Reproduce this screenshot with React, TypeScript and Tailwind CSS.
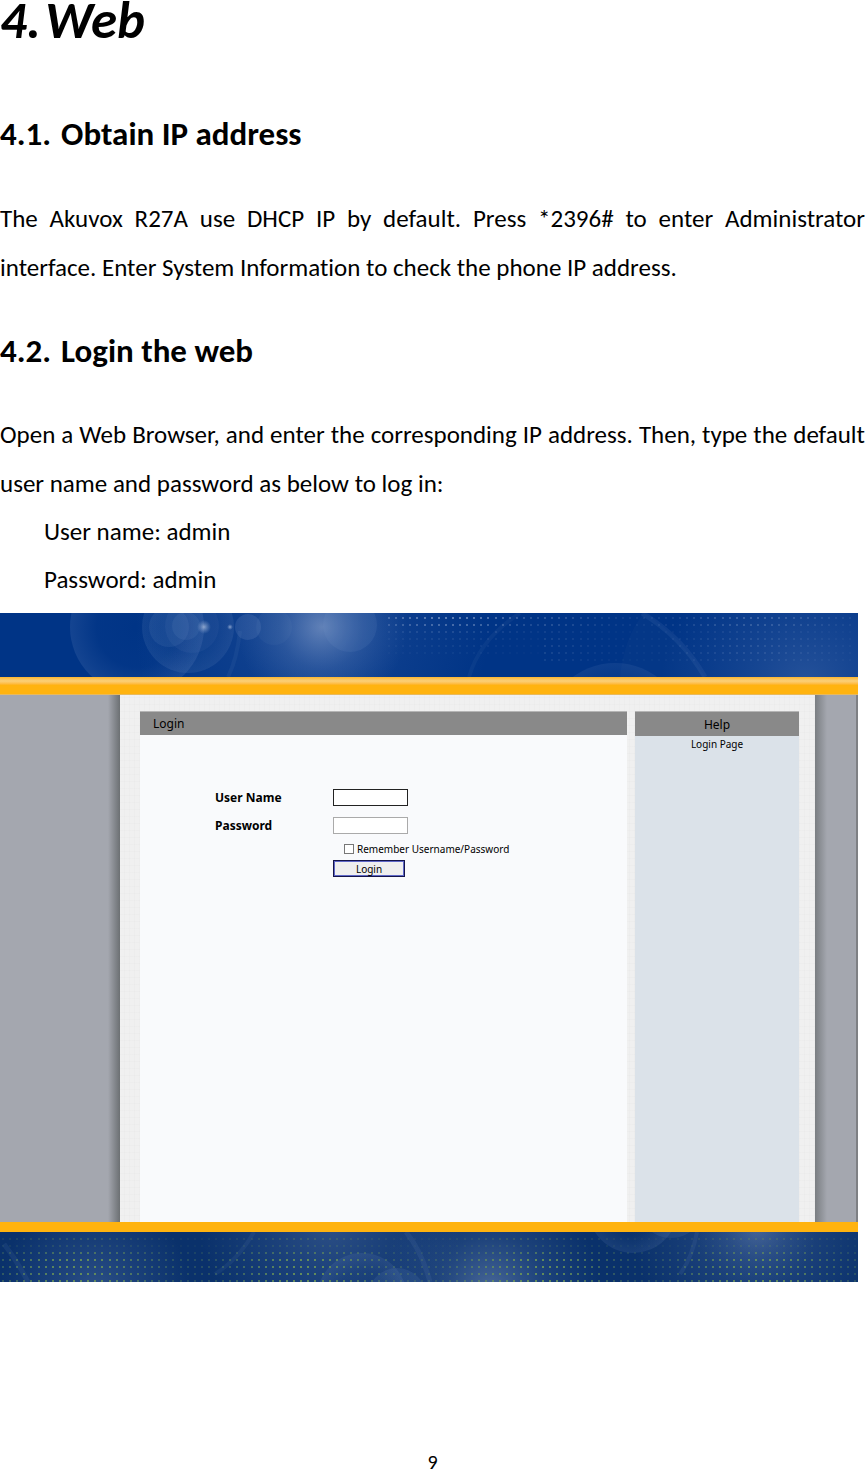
import type { ReactNode } from "react";

type Dot = { x: number; y: number; o: number };

// Dot grid that fades by row and drifts in brightness along x
function makeDots(from: number, to: number, top: number, rows: number[], phase: number): Dot[] {
  const dots: Dot[] = [];
  rows.forEach((strength, row) => {
    for (let i = 0; from + i * 7.1 < to; i++) {
      const x = from + i * 7.1;
      const wave = 0.65 + 0.35 * Math.cos((x - phase) / 36);
      dots.push({ x: Math.round(x), y: top + row * 7, o: strength * wave });
    }
  });
  return dots;
}

const headerDots = [
  ...makeDots(388, 540, 4, [0.45, 0.34, 0.14, 0.09, 0.07, 0.05], 450),
  ...makeDots(544, 856, 4, [0.24, 0.2, 0.09, 0.12, 0.13, 0.12, 0.1], 750),
];
const footerDots = makeDots(2, 858, 6, [0.3, 0.25, 0.6, 0.9, 0.9, 0.9, 0.9], 80);

function HeaderArt() {
  return (
    <svg viewBox="0 0 858 64" preserveAspectRatio="none" className="block w-full h-16 bg-[#003486]" aria-hidden="true">
      <defs>
        <radialGradient id="sun">
          <stop offset="0" stopColor="#a9bbdc" stopOpacity="0.5" />
          <stop offset="0.5" stopColor="#7f9acb" stopOpacity="0.2" />
          <stop offset="1" stopColor="#6c8bc4" stopOpacity="0" />
        </radialGradient>
        <radialGradient id="haze">
          <stop offset="0" stopColor="#8fa6d2" stopOpacity="0.26" />
          <stop offset="0.6" stopColor="#6c8bc4" stopOpacity="0.12" />
          <stop offset="1" stopColor="#6c8bc4" stopOpacity="0" />
        </radialGradient>
        <radialGradient id="rim">
          <stop offset="0" stopColor="#7f9acb" stopOpacity="0" />
          <stop offset="0.6" stopColor="#7f9acb" stopOpacity="0.02" />
          <stop offset="1" stopColor="#7f9acb" stopOpacity="0.16" />
        </radialGradient>
        <radialGradient id="star">
          <stop offset="0" stopColor="#d5e0f2" stopOpacity="0.6" />
          <stop offset="1" stopColor="#9fb4dc" stopOpacity="0" />
        </radialGradient>
      </defs>
      <circle cx="137" cy="14" r="67" fill="url(#rim)" />
      <circle cx="312" cy="14" r="178" fill="url(#haze)" opacity="0.7" />
      <circle cx="188" cy="14" r="46" fill="#7f9acb" opacity="0.05" />
      <circle cx="188" cy="14" r="46" fill="url(#rim)" opacity="0.6" />
      <circle cx="192" cy="13" r="27" fill="#7f9acb" opacity="0.08" />
      <circle cx="169" cy="14" r="20" fill="#7f9acb" opacity="0.12" />
      <circle cx="186" cy="13" r="14" fill="#7f9acb" opacity="0.12" />
      <circle cx="248" cy="14" r="13" fill="#7f9acb" opacity="0.18" />
      <circle cx="274" cy="14" r="18" fill="#7f9acb" opacity="0.07" />
      <circle cx="322" cy="14" r="85" fill="url(#sun)" />
      <circle cx="350" cy="12" r="27" fill="#7f9acb" opacity="0.12" />
      <circle cx="204" cy="14" r="7" fill="url(#star)" />
      <circle cx="230" cy="14" r="3" fill="url(#star)" />
      <path d="M240 18 Q237 46 228 64" stroke="#7f9acb" strokeOpacity="0.09" strokeWidth="4" fill="none" />
      <path d="M469 64 Q480 26 520 0" stroke="#7f9acb" strokeOpacity="0.07" strokeWidth="4" fill="none" />
      <path d="M642 0 Q682 24 705 64" stroke="#7f9acb" strokeOpacity="0.1" strokeWidth="5" fill="none" />
      <path d="M620 64 Q624 24 644 0 Q682 24 705 64Z" fill="#7f9acb" opacity="0.03" />
      <circle cx="615" cy="120" r="70" fill="url(#rim)" opacity="0.7" />
      <circle cx="806" cy="70" r="145" fill="url(#haze)" />
      {headerDots.map((d, i) => (
        <rect key={i} x={d.x} y={d.y} width="2" height="2" fill="#c3d0e8" opacity={d.o} />
      ))}
    </svg>
  );
}

function FooterArt() {
  return (
    <svg viewBox="0 0 858 50" preserveAspectRatio="none" className="block w-full h-[50px] bg-[#0a316b]" aria-hidden="true">
      <circle cx="95" cy="58" r="95" fill="url(#haze)" />
      <circle cx="330" cy="-8" r="130" fill="url(#haze)" />
      <circle cx="490" cy="58" r="110" fill="url(#sun)" opacity="0.8" />
      <circle cx="757" cy="-4" r="125" fill="url(#haze)" />
      <circle cx="757" cy="-4" r="60" fill="url(#sun)" opacity="0.4" />
      <circle cx="362" cy="66" r="45" fill="url(#rim)" opacity="0.8" />
      <circle cx="397" cy="65" r="29" fill="#7f9acb" opacity="0.12" />
      <circle cx="633" cy="-24" r="45" fill="url(#rim)" opacity="0.8" />
      <circle cx="671" cy="-28" r="34" fill="#7f9acb" opacity="0.12" />
      <path d="M4 12 Q18 30 28 50" stroke="#7f9acb" strokeOpacity="0.1" strokeWidth="5" fill="none" />
      <path d="M254 0 Q238 28 215 42" stroke="#7f9acb" strokeOpacity="0.09" strokeWidth="4" fill="none" />
      <path d="M406 0 Q422 20 430 50" stroke="#7f9acb" strokeOpacity="0.1" strokeWidth="5" fill="none" />
      <path d="M697 0 Q692 26 680 42" stroke="#7f9acb" strokeOpacity="0.1" strokeWidth="4" fill="none" />
      {footerDots.map((d, i) => (
        <rect key={i} x={d.x} y={d.y} width="2" height="2" fill="#6a9458" opacity={d.o} />
      ))}
    </svg>
  );
}

function SectionTitle({ number, children }: { number: string; children: ReactNode }) {
  return (
    <h2 className="flex gap-[10px] text-[33px] leading-[48px] font-bold">
      <span>{number}</span>
      <span>{children}</span>
    </h2>
  );
}

function LoginScreen() {
  return (
    <section className="mt-[9px] mr-[7px] font-['Noto_Sans',sans-serif] text-black">
      <HeaderArt />
      <div className="h-[18px] bg-[#ffb30f] border-b border-[#e8b95c]">
        <div className="h-2 bg-linear-to-b from-[#fcb62a] via-[#fad078] to-[#ffb30f]" />
      </div>

      <div className="flex h-[527px]">
        {/* Left margin with the page shadow */}
        <div className="w-[120px] flex justify-end bg-[#a4a7af]">
          <div className="w-3 bg-linear-to-r from-[#a4a7af] to-[#6c7073]" />
        </div>

        <div className="flex-1 flex gap-2 pl-5 pr-4 pt-4 bg-[#f0f0f0] bg-[repeating-linear-gradient(0deg,#0000_0_6px,#00000003_6px_7px),repeating-linear-gradient(90deg,#0000_0_4px,#00000003_4px_5px)]">
          <form className="flex-1 bg-[#f9fafc]" onSubmit={(e) => e.preventDefault()}>
            <h3 className="h-6 pl-[13px] bg-[#898989] border-t border-[#b5b5b5] text-[12px] leading-[24px]">Login</h3>
            <div className="pl-[75px] pt-[54px] text-[12px]">
              <div className="flex items-center h-[17px]">
                <label htmlFor="username" className="w-[118px] font-bold">User Name</label>
                <input id="username" type="text" className="w-[75px] h-[17px] bg-white border border-[#222] px-1 text-[10px]" />
              </div>
              <div className="flex items-center h-[17px] mt-[11px]">
                <label htmlFor="password" className="w-[118px] font-bold">Password</label>
                <input id="password" type="password" className="w-[75px] h-[17px] bg-white border border-[#aaa] px-1 text-[10px]" />
              </div>
              <div className="flex items-center h-[14px] mt-2 pl-[129px] gap-[3px]">
                <input id="remember" type="checkbox" className="appearance-none size-[10px] bg-white border border-[#777] checked:bg-[#444]" />
                <label htmlFor="remember" className="text-[10px] leading-[14px]">Remember Username/Password</label>
              </div>
              <button
                type="submit"
                className="block ml-[118px] mt-1 w-[72px] h-[17px] bg-[#efefef] border border-[#14144a] shadow-[inset_0_0_0_1px_#6068c8] text-[10px] leading-[14px]"
              >
                Login
              </button>
            </div>
          </form>

          <aside className="w-[164px] bg-[#dbe2e9] text-center">
            <h3 className="h-[25px] bg-[#898989] border-t border-[#b5b5b5] text-[12px] leading-[26px]">Help</h3>
            <p className="text-[10px] leading-[16px]">Login Page</p>
          </aside>
        </div>

        <div className="w-[43px] flex bg-[#a4a7af] border-r-2 border-[#7e8084]">
          <div className="w-3 bg-linear-to-r from-[#7a7e82] to-[#a4a7af]" />
        </div>
      </div>

      <div className="h-[10px] bg-[#ffb30f]" />
      <FooterArt />
    </section>
  );
}

export default function App() {
  return (
    <main className="bg-white text-black font-[Carlito,Calibri,Lato,sans-serif] [font-variant-ligatures:none]">
      <h1 className="flex gap-1 h-[60px] text-[53px] leading-[40px] font-bold italic">
        <span>4.</span>
        <span>Web</span>
      </h1>

      <div className="mt-[50px]">
        <SectionTitle number="4.1.">Obtain IP address</SectionTitle>
        <p className="mt-9 text-[25px] leading-[49px]">
          <span className="block [text-align-last:justify]">
            The Akuvox R27A use DHCP IP by default. Press *2396# to enter Administrator
          </span>
          <span className="block">interface. Enter System Information to check the phone IP address.</span>
        </p>
      </div>

      <div className="mt-[35px]">
        <SectionTitle number="4.2.">Login the web</SectionTitle>
        <p className="mt-[35px] text-[25px] leading-[49px]">
          <span className="block [text-align-last:justify]">
            Open a Web Browser, and enter the corresponding IP address. Then, type the default
          </span>
          <span className="block">user name and password as below to log in:</span>
        </p>
        <p className="pl-11 text-[25px] leading-[48px]">User name: admin</p>
        <p className="pl-11 text-[25px] leading-[48px]">Password: admin</p>
      </div>

      <LoginScreen />

      <footer className="pt-[167px] text-center text-[20px] leading-[26px]">9</footer>
    </main>
  );
}
